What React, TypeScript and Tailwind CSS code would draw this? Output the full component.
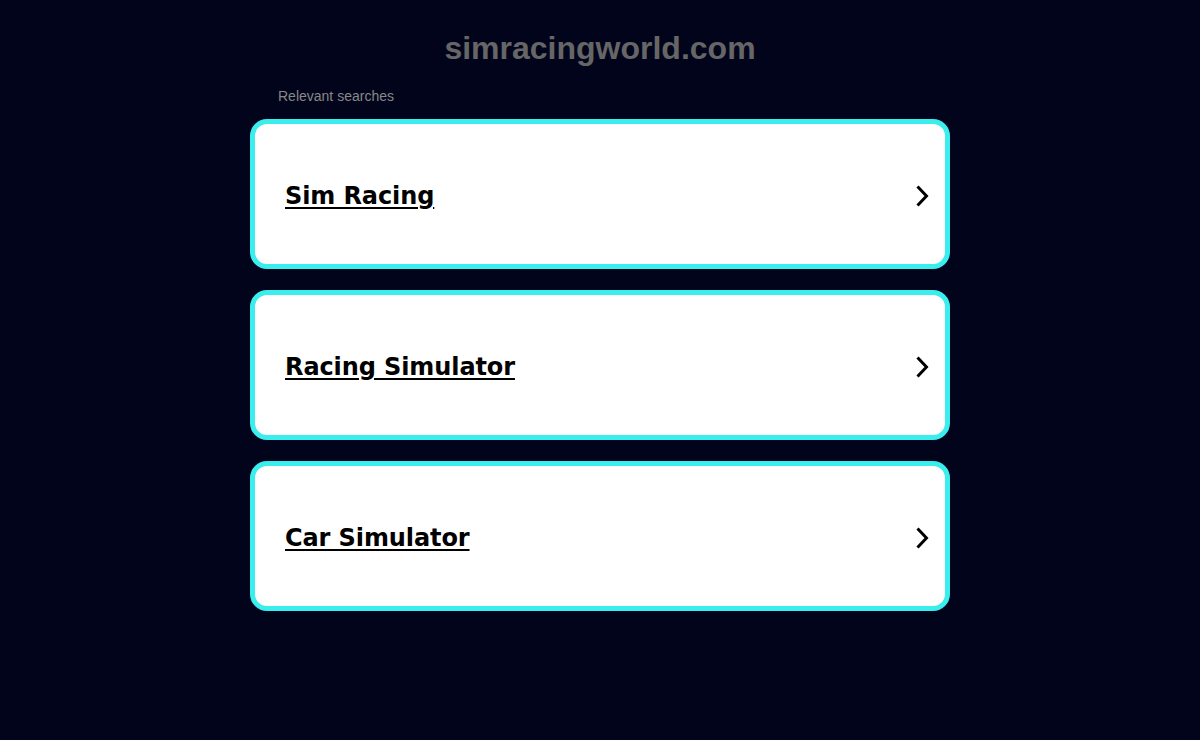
const searches = ['Sim Racing', 'Racing Simulator', 'Car Simulator'];

function Chevron() {
  return (
    <svg width="14" height="24" viewBox="0 0 14 24" fill="none" className="shrink-0">
      <path d="M2.5 2.5 L11.5 12 L2.5 21.5" stroke="#000" strokeWidth="3" />
    </svg>
  );
}

export default function App() {
  return (
    <div className="min-h-[740px] w-full bg-[#02041c] font-['Liberation_Sans',Arial,sans-serif]">
      <div className="mx-auto w-[700px] pt-[30px]">
        <h1 className="text-center text-[32px] font-bold leading-[37px] text-[#666666]">
          simracingworld.com
        </h1>
        <p className="mt-[21px] pl-[28px] text-[14px] leading-[16px] text-[#888888]">
          Relevant searches
        </p>
        <div className="mt-[15px] flex flex-col gap-[21px]">
          {searches.map(s => (
            <a
              key={s}
              href="#"
              className="flex h-[150px] items-center justify-between rounded-[17px] border-[5px] border-[#3beeee] bg-white pl-[30px] pr-[16px] pt-[3px]"
            >
              <span className="font-['DejaVu_Sans',Verdana,sans-serif] text-[24px] font-bold tracking-[-0.1px] text-black underline decoration-2 underline-offset-[3px]">
                {s}
              </span>
              <Chevron />
            </a>
          ))}
        </div>
      </div>
    </div>
  );
}
